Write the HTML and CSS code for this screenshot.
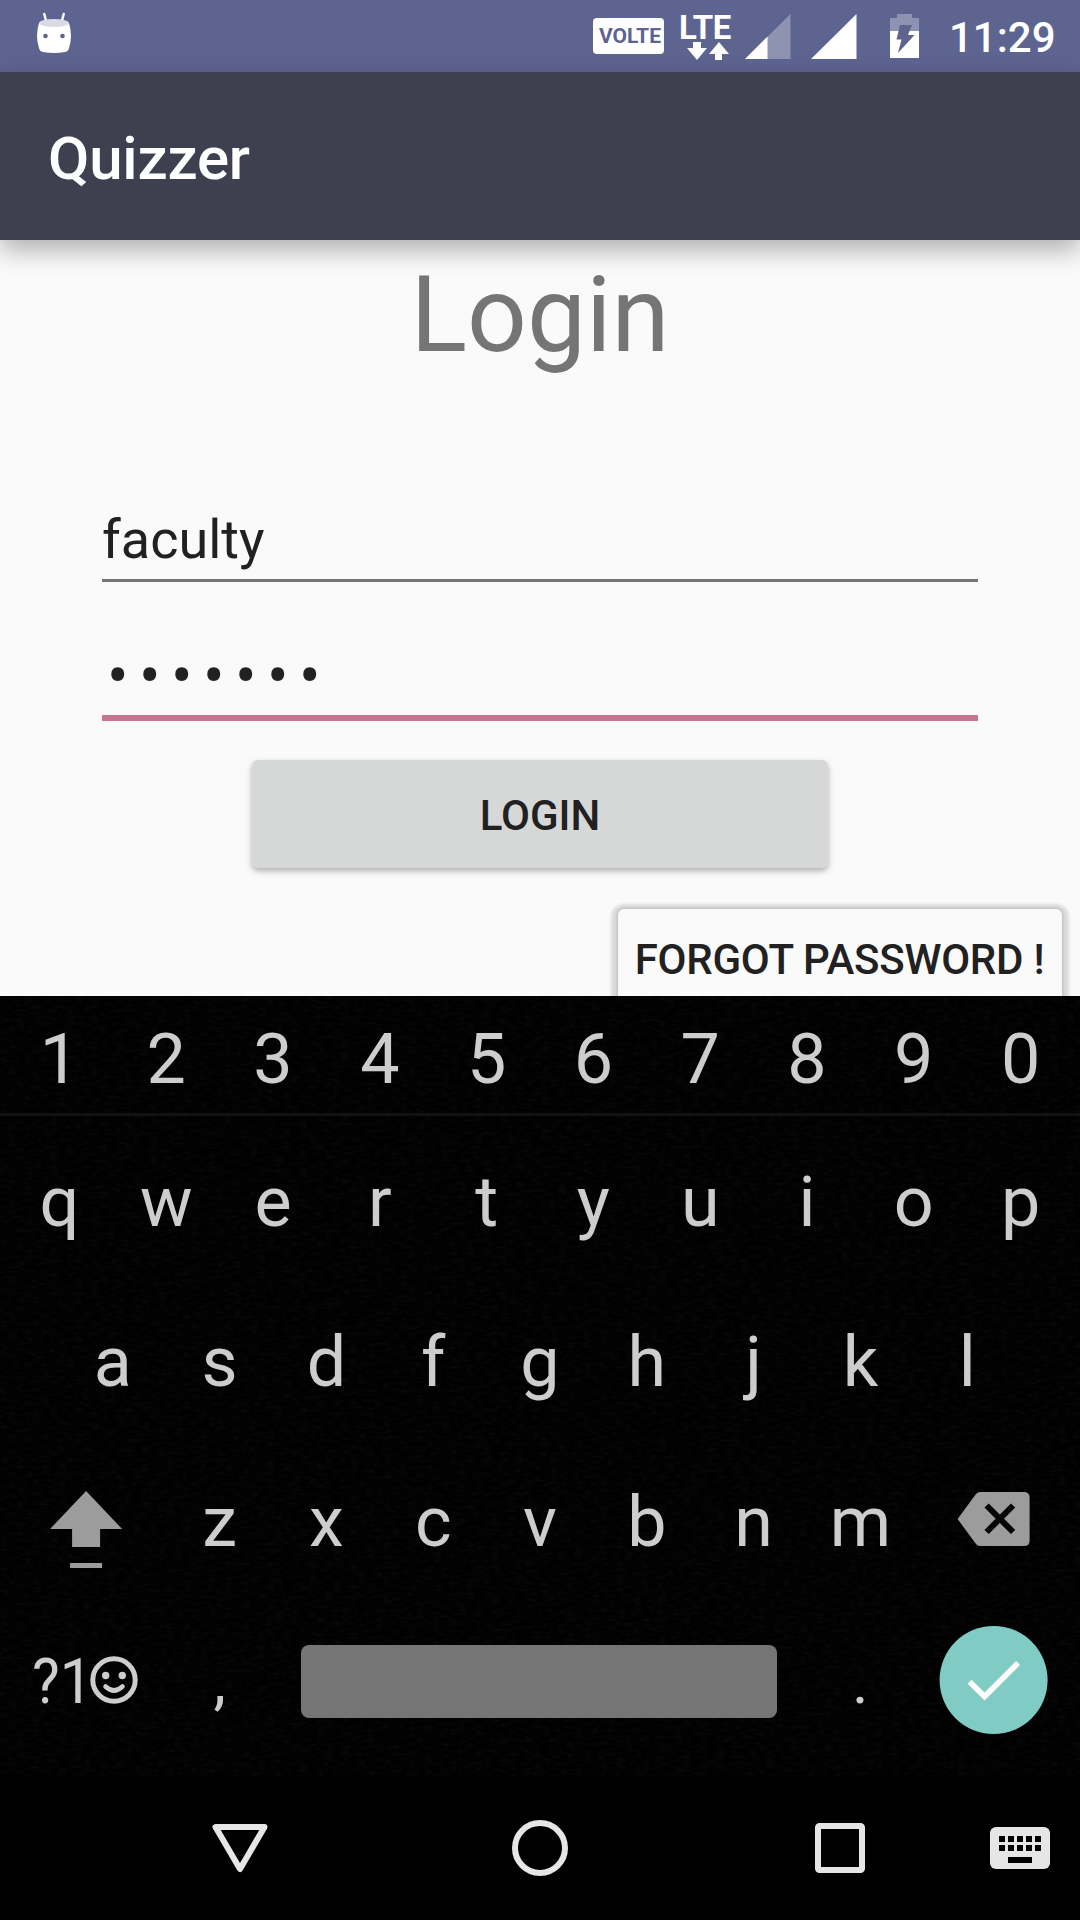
FILE: index.html
```html
<!DOCTYPE html>
<html lang="en">
<head>
<meta charset="utf-8">
<title>Quizzer</title>
<link rel="stylesheet" href="styles.css">
</head>
<body>
<div class="screen">
  <header class="status">
    <svg class="status-app" width="36" height="44" viewBox="0 0 36 44">
      <path d="M8.300 2l2 8M27.700 2l-2 8" stroke="#fff" stroke-width="2.400" stroke-linecap="round"/>
      <path d="M3 11Q-1 24 3 36Q3.600 39.500 7 40Q18 42 29 40Q32.400 39.500 33 36Q37 24 33 11Z" fill="#fff"/>
      <ellipse cx="18" cy="11" rx="15" ry="4" fill="#dadae6"/>
      <circle cx="9.500" cy="24" r="2.300" fill="#5d6490"/><circle cx="26.500" cy="24" r="2.300" fill="#5d6490"/>
    </svg>
    <span class="volte">VOLTE</span>
    <span class="lte">
      <span class="lte-text">LTE</span>
      <svg width="44" height="18" viewBox="0 0 44 18" fill="#fff">
        <path d="M6 0h8v6h6L10 18L0 6h6zM28 18h7v-6h7L32 0L22 12h6z"/>
      </svg>
    </span>
    <svg class="signal" width="46" height="46" viewBox="0 0 46 46">
      <path d="M0 45L45.500 0V45z" fill="#8f93b2"/><path d="M0 45L22.500 22.500V45z" fill="#fff"/>
    </svg>
    <svg class="signal-full" width="46" height="46" viewBox="0 0 46 46"><path d="M0 45L45.500 0V45z" fill="#fff"/></svg>
    <svg class="battery" width="29" height="44" viewBox="0 0 29 44">
      <path d="M7 0h15v4h7v14H0V4h7z" fill="#8f93b2"/><path d="M0 17h29v27H0z" fill="#fff"/>
      <path d="M10 11h12l-4 10h6.500L8 39l3.500-13.500H6.500z" fill="#5d6490"/>
    </svg>
    <span class="clock">11:29</span>
  </header>
  <div class="appbar">Quizzer</div>

  <main class="content">
    <h1 class="heading">Login</h1>
    <div class="field field-user">faculty</div>
    <div class="field field-pass">•••••••</div>
    <button class="btn btn-login">LOGIN</button>
    <button class="btn btn-forgot">FORGOT PASSWORD !</button>
  </main>

  <section class="keyboard">
    <svg class="leather" width="1080" height="780">
      <filter id="grain" x="0" y="0" width="100%" height="100%" color-interpolation-filters="sRGB">
        <feTurbulence type="fractalNoise" baseFrequency="0.120 0.300" numOctaves="3" seed="4"/>
        <feColorMatrix values="0 0 0 0 1  0 0 0 0 1  0 0 0 0 1  0.200 0 0 0 -0.080"/>
      </filter>
      <rect width="1080" height="780" filter="url(#grain)"/>
    </svg>
    <div class="row numbers"><span>1</span><span>2</span><span>3</span><span>4</span><span>5</span><span>6</span><span>7</span><span>8</span><span>9</span><span>0</span></div>
    <div class="row first"><span>q</span><span>w</span><span>e</span><span>r</span><span>t</span><span>y</span><span>u</span><span>i</span><span>o</span><span>p</span></div>
    <div class="row"><span>a</span><span>s</span><span>d</span><span>f</span><span>g</span><span>h</span><span>j</span><span>k</span><span>l</span></div>
    <div class="row third">
      <svg class="wide" viewBox="0 0 160 156" fill="#9c9c9c"><path d="M80 48L116 86H94V104H66V86H44zM64 120h32v5H64z"/></svg>
      <span>z</span><span>x</span><span>c</span><span>v</span><span>b</span><span>n</span><span>m</span>
      <svg class="wide" viewBox="0 0 160 156">
        <path d="M66 49H110Q115.500 49 115.500 54.500V97.500Q115.500 103 110 103H66Q63 103 61.500 100.500L43.500 76L61.500 51.500Q63 49 66 49z" fill="#9c9c9c"/>
        <path d="M72.500 62.500l26.500 26.500M99 62.500l-26.500 26.500" stroke="#050505" stroke-width="6"/>
      </svg>
    </div>
    <div class="row bottom">
      <div class="wide symbols"><span class="symbols-text">?1</span><svg width="48" height="48" viewBox="0 0 48 48" fill="none" stroke="#cdcdcd">
        <circle cx="24" cy="24" r="21.200" stroke-width="5"/>
        <path d="M15.500 30.500Q24 38.500 32.500 30.500" stroke-width="4.600" stroke-linecap="round"/>
        <circle cx="15.700" cy="19.500" r="3.700" fill="#cdcdcd" stroke="none"/><circle cx="32.300" cy="19.500" r="3.700" fill="#cdcdcd" stroke="none"/>
      </svg></div>
      <span>,</span><div class="space"></div><span>.</span>
      <svg class="wide" viewBox="0 0 160 156"><circle cx="79.500" cy="81" r="54" fill="#80cbc4"/><path d="M55.500 82.700L70.500 97.500L104 64" fill="none" stroke="#fff" stroke-width="5.600"/></svg>
    </div>
  </section>

  <nav class="navbar">
    <svg class="nav-key" viewBox="0 0 300 144"><path d="M125.500 51H174.500L150 93z"/></svg>
    <svg class="nav-key" viewBox="0 0 300 144"><circle cx="150" cy="72" r="25"/></svg>
    <svg class="nav-key" viewBox="0 0 300 144"><rect x="128" y="50" width="44" height="44" rx="1.500"/></svg>
    <svg width="60" height="42" viewBox="0 0 60 42">
      <rect width="60" height="42" rx="6" fill="#e6e6e6"/>
      <path d="M9 12H51M9 21H51" stroke="#000" stroke-width="6" stroke-dasharray="6 3"/><path d="M18 33H42" stroke="#000" stroke-width="6"/>
    </svg>
  </nav>
</div>
</body>
</html>
```
FILE: styles.css
```css
* { box-sizing: border-box; }
body { margin: 0; font-family: Roboto, sans-serif; }
svg { display: block; flex: none; }
.screen {
  width: 1080px; height: 1920px; overflow: hidden;
  display: flex; flex-direction: column; background: #fafafa;
}

.status {
  height: 72px; flex: none; background: #5d6490; color: #fff;
  display: flex; align-items: flex-start; padding-left: 36px;
}
.status-app { margin-top: 12px; }
.volte {
  width: 71px; height: 36px; margin: 18px 0 0 521px; padding-left: 3px; border-radius: 4px;
  background: #fff; color: #5d6490; text-align: center;
  font-size: 21px; font-weight: 700; line-height: 36px;
}
.lte { width: 53px; margin: 15px 0 0 15px; }
.lte-text {
  display: block; height: 27px; line-height: 25px;
  font-size: 33px; font-weight: 700; letter-spacing: -0.5px;
}
.lte svg { margin-left: 8px; }
.signal { margin: 14px 0 0 13px; }
.signal-full { margin: 14px 0 0 20px; }
.battery { margin: 14px 0 0 33px; }
.clock { margin: 13px 0 0 30px; font-size: 42px; font-weight: 500; line-height: 50px; }

.appbar {
  height: 168px; flex: none; padding: 5px 0 0 48px; position: relative;
  background: #3e4050; color: #fff; font-size: 60px; font-weight: 500; line-height: 163px;
  letter-spacing: -0.2px;
  box-shadow: 0 10px 24px rgba(0, 0, 0, 0.3);
}

.content {
  height: 756px; flex: none; overflow: hidden; color: #212121;
  display: flex; flex-direction: column;
}
.content > * { flex: none; }
.heading {
  margin: 14px 0 0; font-size: 105px; font-weight: 400; line-height: 124px;
  color: #757575; text-align: center;
}
.field { margin: 0 102px; font-size: 54px; line-height: 64px; white-space: nowrap; }
.field-user { height: 74px; margin-top: 130px; border-bottom: 3px solid #757575; }
.field-pass {
  height: 74px; margin-top: 65px; padding-left: 5px; font-size: 64px; line-height: 59px; letter-spacing: 10.4px;
  border-bottom: 6px solid #c8748f;
}
.btn {
  border: 0; padding: 3px 0 0; border-radius: 6px; color: #212121;
  font: 500 42px/50px Roboto, sans-serif; white-space: nowrap;
}
.btn-login {
  width: 576px; height: 108px; margin: 39px 0 0 252px; background: #d6d8d7;
  box-shadow: 0 3px 6px rgba(0, 0, 0, 0.3);
}
.btn-forgot {
  width: 444px; height: 108px; margin: 41px 18px 0 auto; padding: 0 1px 6px 0; background: #fafafa;
  letter-spacing: -0.25px;
  box-shadow: 0 0 3px 1px rgba(0, 0, 0, 0.15), 0 2px 3px 7px rgba(0, 0, 0, 0.12);
}

.keyboard {
  height: 780px; flex: none; position: relative; overflow: hidden;
  background: #010101; color: #cdcdcd; font-size: 70px;
}
.leather { position: absolute; inset: 0; opacity: 0.32; }
.row {
  position: relative; display: flex; justify-content: center;
  height: 160px; padding: 0 6px; line-height: 161px; text-align: center;
}
.row > span { width: 106.8px; }
.numbers { height: 120px; line-height: 126px; border-bottom: 3px solid #121212; }
.first { margin-top: 6px; }
.third { height: 157px; }
.third .wide { margin-top: 1px; }
.wide { width: 160.2px; height: 156px; flex: none; }
.bottom { font-size: 63px; line-height: 165px; }
.symbols { display: flex; padding-left: 26px; }
.symbols-text { width: 58px; transform: scaleX(0.93); transform-origin: left; text-align: left; white-space: nowrap; }
.symbols svg { margin: 57px 0 0; }
.space { width: 476px; height: 73px; margin: 46px 30px 0 28px; border-radius: 8px; background: #757575; }

.navbar { height: 144px; flex: none; display: flex; align-items: center; padding-left: 90px; background: #000; }
.nav-key { width: 300px; height: 144px; fill: none; stroke: #e6e6e6; stroke-width: 6; stroke-linejoin: round; }
```
